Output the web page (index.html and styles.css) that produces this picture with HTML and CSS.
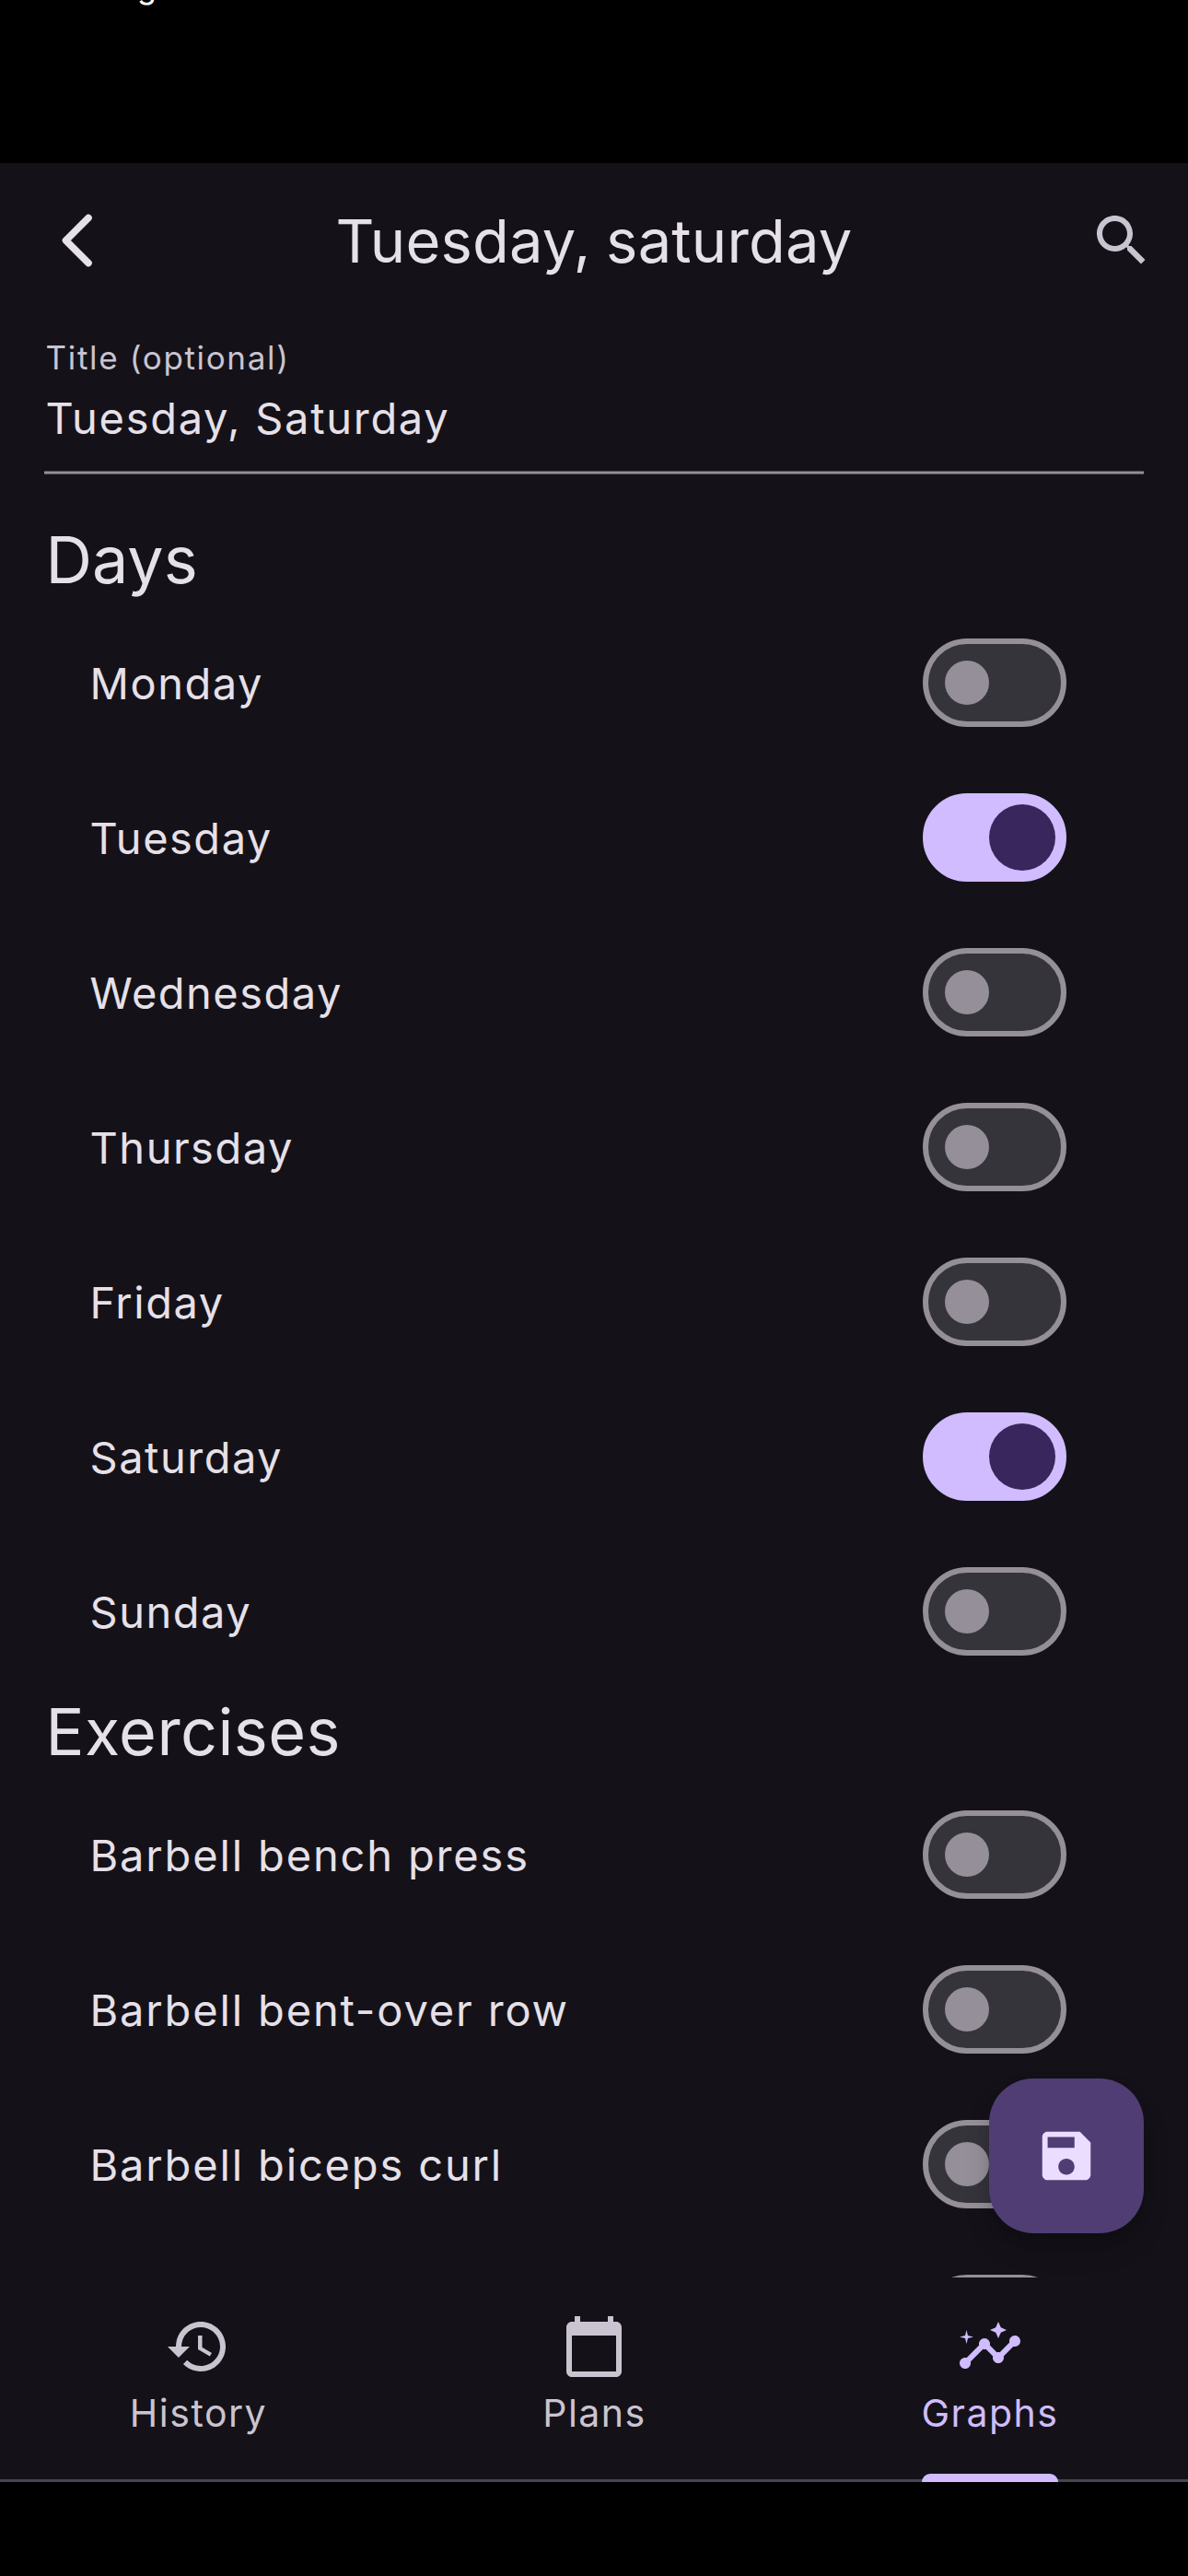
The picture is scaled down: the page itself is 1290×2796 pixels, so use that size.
FILE: index.html
```html
<!DOCTYPE html>
<html lang="en">
<head>
<meta charset="utf-8">
<title>Tuesday, saturday</title>
<link rel="stylesheet" href="styles.css">
</head>
<body>
<div class="status"><span class="status-text">g</span></div>
<header class="appbar">
  <svg class="back" viewBox="0 0 72 72"><path d="M48 11.5 23.5 36 48 60.5" fill="none" stroke="currentColor" stroke-width="7.6" stroke-linecap="round" stroke-linejoin="round"/></svg>
  <h1 class="appbar-title">Tuesday, saturday</h1>
  <svg class="search" viewBox="0 0 24 24"><path fill="currentColor" d="M15.5 14h-.79l-.28-.27C15.41 12.59 16 11.11 16 9.5 16 5.91 13.09 3 9.5 3S3 5.91 3 9.5 5.91 16 9.5 16c1.61 0 3.09-.59 4.23-1.57l.27.28v.79l5 4.99L20.49 19l-4.99-5zm-6 0C7.01 14 5 11.99 5 9.5S7.01 5 9.5 5 14 7.01 14 9.5 11.99 14 9.5 14z"/></svg>
</header>
<main class="content">
  <div class="field">
    <div class="field-label">Title (optional)</div>
    <div class="field-value">Tuesday, Saturday</div>
  </div>
  <h2 class="section">Days</h2>
  <ul class="list days">
    <li class="row"><span>Monday</span><i class="switch"></i></li>
    <li class="row"><span>Tuesday</span><i class="switch on"></i></li>
    <li class="row"><span>Wednesday</span><i class="switch"></i></li>
    <li class="row"><span>Thursday</span><i class="switch"></i></li>
    <li class="row"><span>Friday</span><i class="switch"></i></li>
    <li class="row"><span>Saturday</span><i class="switch on"></i></li>
    <li class="row"><span>Sunday</span><i class="switch"></i></li>
  </ul>
  <h2 class="section wide">Exercises</h2>
  <ul class="list exercises">
    <li class="row"><span>Barbell bench press</span><i class="switch"></i></li>
    <li class="row"><span>Barbell bent-over row</span><i class="switch"></i></li>
    <li class="row"><span>Barbell biceps curl</span><i class="switch"></i></li>
    <li class="row"><span></span><i class="switch"></i></li>
  </ul>
  <button class="fab" aria-label="Save"><svg viewBox="0 0 24 24"><path fill="currentColor" d="M17 3H5c-1.11 0-2 .9-2 2v14c0 1.1.89 2 2 2h14c1.1 0 2-.9 2-2V7l-4-4zm-5 16c-1.66 0-3-1.34-3-3s1.34-3 3-3 3 1.34 3 3-1.34 3-3 3zm3-10H5V5h10v4z"/></svg></button>
</main>
<nav class="tabs">
  <a class="tab">
    <svg viewBox="0 0 24 24"><path fill="currentColor" d="M13 3c-4.97 0-9 4.03-9 9H1l3.89 3.89.07.14L9 12H6c0-3.87 3.13-7 7-7s7 3.13 7 7-3.13 7-7 7c-1.93 0-3.68-.79-4.94-2.06l-1.42 1.42C8.27 19.99 10.51 21 13 21c4.97 0 9-4.03 9-9s-4.03-9-9-9zm-1 5v5l4.28 2.54.72-1.21-3.5-2.08V8H12z"/></svg>
    <span>History</span>
  </a>
  <a class="tab">
    <svg viewBox="0 0 24 24"><path fill="currentColor" d="M20 3h-1V1h-2v2H7V1H5v2H4c-1.1 0-2 .9-2 2v16c0 1.1.9 2 2 2h16c1.1 0 2-.9 2-2V5c0-1.1-.9-2-2-2zm0 18H4V8h16v13z"/></svg>
    <span>Plans</span>
  </a>
  <a class="tab active">
    <svg viewBox="0 0 24 24"><path fill="currentColor" d="M21 8c-1.45 0-2.26 1.44-1.93 2.51l-3.55 3.56c-.3-.09-.74-.09-1.04 0l-2.55-2.55C12.27 10.45 11.46 9 10 9c-1.45 0-2.27 1.44-1.93 2.52l-4.56 4.55C2.44 15.74 1 16.55 1 18c0 1.1.9 2 2 2 1.45 0 2.26-1.44 1.93-2.51l4.55-4.56c.3.09.74.09 1.04 0l2.55 2.55C12.73 16.55 13.54 18 15 18c1.45 0 2.27-1.44 1.93-2.52l3.56-3.55C21.56 12.26 23 11.45 23 10c0-1.1-.9-2-2-2z"/><path fill="currentColor" d="M15 9l.94-2.07L18 6l-2.06-.93L15 3l-.92 2.07L12 6l2.08.93zM3.5 11L4 9l2-.5L4 8l-.5-2L3 8l-2 .5L3 9z"/></svg>
    <span>Graphs</span>
  </a>
</nav>
</body>
</html>
```
FILE: styles.css
```css
* {
  box-sizing: border-box;
}

body {
  margin: 0;
  width: 1290px;
  height: 2796px;
  display: flex;
  flex-direction: column;
  overflow: hidden;
  background: #000;
  color: #e6e0e9;
  font-family: Inter, "Liberation Sans", sans-serif;
  font-weight: 400;
}

.status {
  height: 177px;
  flex: none;
  padding-left: 149px;
  overflow: hidden;
  color: #fff;
}

.status-text {
  display: block;
  margin-top: -35px;
  font-size: 34px;
  line-height: 42px;
}

.appbar {
  height: 168px;
  flex: none;
  display: flex;
  align-items: center;
  justify-content: space-between;
  padding: 0 36px 0 48px;
  background: #141218;
}

.back,
.search {
  width: 72px;
  height: 72px;
}

.search {
  color: #cac4d0;
}

.appbar-title {
  margin: 0;
  padding: 2px 12px 0 0;
  font-size: 65px;
  font-weight: 400;
  line-height: 84px;
  letter-spacing: 0.2px;
  word-spacing: -2px;
}

.content {
  position: relative;
  height: 2127px;
  flex: none;
  overflow: hidden;
  background: #141218;
}

.field {
  height: 170px;
  margin: 0 48px 46px;
  padding: 22px 0 0 1.5px;
  background: linear-gradient(#56525c 1px, #948f99 1px 3px, #56525c 3px) left bottom / 100% 4px no-repeat;
}

.field-label {
  font-size: 35px;
  line-height: 42px;
  letter-spacing: 1.66px;
  color: #cac4d0;
}

.field-value {
  margin-top: 15px;
  font-size: 47px;
  line-height: 59px;
  letter-spacing: 1.7px;
}

.section {
  height: 96px;
  margin: 0;
  padding-left: 49.5px;
  font-size: 70px;
  font-weight: 400;
  line-height: 93px;
}

.section.wide {
  letter-spacing: 0.45px;
}

.list {
  margin: 0;
  padding: 0;
  list-style: none;
}

.row {
  height: 168px;
  display: flex;
  align-items: center;
  justify-content: space-between;
  padding: 0 132px 0 97.5px;
  font-size: 47px;
  line-height: 59px;
}

.days .row {
  letter-spacing: 1.5px;
}

.exercises .row {
  letter-spacing: 1.85px;
}

.switch {
  width: 156px;
  height: 96px;
  display: flex;
  align-items: center;
  padding-left: 18px;
  border: 6px solid #948f99;
  border-radius: 48px;
  background: #36343b;
}

.switch::before {
  content: "";
  width: 48px;
  height: 48px;
  border-radius: 50%;
  background: #948f99;
}

.switch.on {
  padding-left: 66px;
  border-color: #d0bcff;
  background: #d0bcff;
}

.switch.on::before {
  width: 72px;
  height: 72px;
  background: #38265c;
}

.fab {
  position: absolute;
  right: 48px;
  bottom: 48px;
  width: 168px;
  height: 168px;
  display: grid;
  place-items: center;
  padding: 0;
  border: 0;
  border-radius: 48px;
  background: #4f3d74;
  color: #eaddff;
  box-shadow: 0 9px 15px -3px rgba(0, 0, 0, 0.2), 0 18px 30px rgba(0, 0, 0, 0.12);
}

.fab svg {
  width: 70px;
  height: 70px;
}

.tabs {
  height: 222px;
  flex: none;
  display: grid;
  grid-template-columns: repeat(3, 1fr);
  justify-items: center;
  border-bottom: 3px solid #49454f;
  background: #141218;
  color: #cac4d0;
}

.tab {
  height: 222px;
  display: flex;
  flex-direction: column;
  align-items: center;
  gap: 12px;
  padding: 39px 0 0 1px;
  font-size: 41px;
  font-weight: 400;
  line-height: 48px;
  letter-spacing: 1.5px;
}

.tab svg {
  width: 72px;
  height: 72px;
}

.tab.active {
  padding-left: 0;
  color: #d0bcff;
}

.tab.active::after {
  content: "";
  width: 148px;
  height: 9px;
  margin-top: 30px;
  border-radius: 9px 9px 0 0;
  background: #d0bcff;
}
```
